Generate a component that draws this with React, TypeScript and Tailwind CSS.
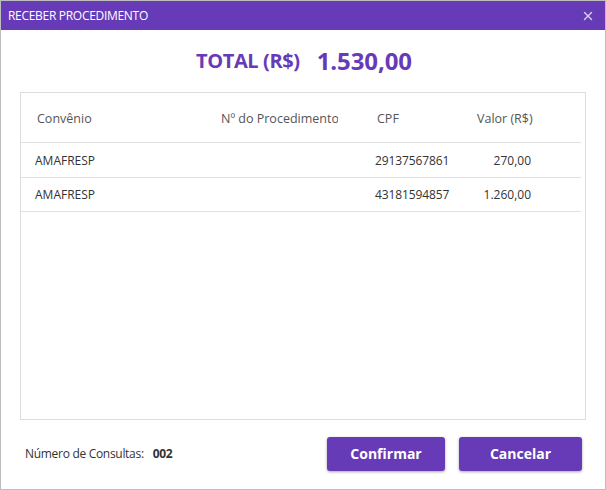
import { X } from "lucide-react";

const rows = [
  { convenio: "AMAFRESP", proc: "", cpf: "29137567861", valor: "270,00" },
  { convenio: "AMAFRESP", proc: "", cpf: "43181594857", valor: "1.260,00" },
];

export default function App() {
  return (
    <div
      className="w-[606px] h-[490px] flex flex-col bg-white border border-[#bdbdbd] text-[#333]"
      style={{ fontFamily: '"Open Sans", "Noto Sans", sans-serif' }}
    >
      <div className="h-[29px] shrink-0 bg-[#673ab7] flex items-center justify-between pl-[7px] pr-[10px]">
        <span className="text-white text-[12px] tracking-[-0.3px]">RECEBER PROCEDIMENTO</span>
        <X className="text-[#d9cdee]" size={14} strokeWidth={2.5} />
      </div>

      <div className="h-[62px] shrink-0 flex items-center justify-center gap-[17px] text-[#673ab7] font-bold pl-[2px]">
        <span className="text-[20px] tracking-[-0.4px]">TOTAL (R$)</span>
        <span className="text-[24px] tracking-[-0.1px]">1.530,00</span>
      </div>

      <div className="mx-[19px] h-[328px] border border-[#dddddd] pr-[4px]">
        <div className="grid grid-cols-[200px_117px_120px_1fr] h-[50px] pt-[3px] items-center text-[12.5px] text-[#555] border-b border-[#e0e0e0]">
          <span className="pl-[16px]">Convênio</span>
          <span className="whitespace-nowrap overflow-hidden">Nº do Procedimento</span>
          <span className="pl-[39px]">CPF</span>
          <span className="pl-[19px]">Valor (R$)</span>
        </div>
        {rows.map((r, i) => (
          <div
            key={r.cpf}
            className={`grid grid-cols-[200px_117px_120px_73px] items-center pt-[1px] text-[12px] text-[#333] border-b border-[#e0e0e0] ${
              i === 0 ? "h-[35px]" : "h-[34px]"
            }`}
          >
            <span className="pl-[14px]">{r.convenio}</span>
            <span>{r.proc}</span>
            <span className="pl-[37px] tracking-[-0.1px]">{r.cpf}</span>
            <span className="text-right">{r.valor}</span>
          </div>
        ))}
      </div>

      <div className="flex-1 flex items-center justify-between pl-[24px] pr-[23px] pb-[2px]">
        <div className="text-[12px] text-[#333] flex gap-[9px] tracking-[-0.3px]">
          <span>Número de Consultas:</span>
          <span className="font-bold">002</span>
        </div>
        <div className="flex gap-[14px]">
          <button className="w-[118px] h-[34px] rounded-[3px] bg-[#673ab7] text-white font-bold text-[14px] shadow-[0_1px_3px_rgba(0,0,0,0.35)]">
            Confirmar
          </button>
          <button className="w-[123px] h-[34px] rounded-[3px] bg-[#673ab7] text-white font-bold text-[14px] shadow-[0_1px_3px_rgba(0,0,0,0.35)]">
            Cancelar
          </button>
        </div>
      </div>
    </div>
  );
}
